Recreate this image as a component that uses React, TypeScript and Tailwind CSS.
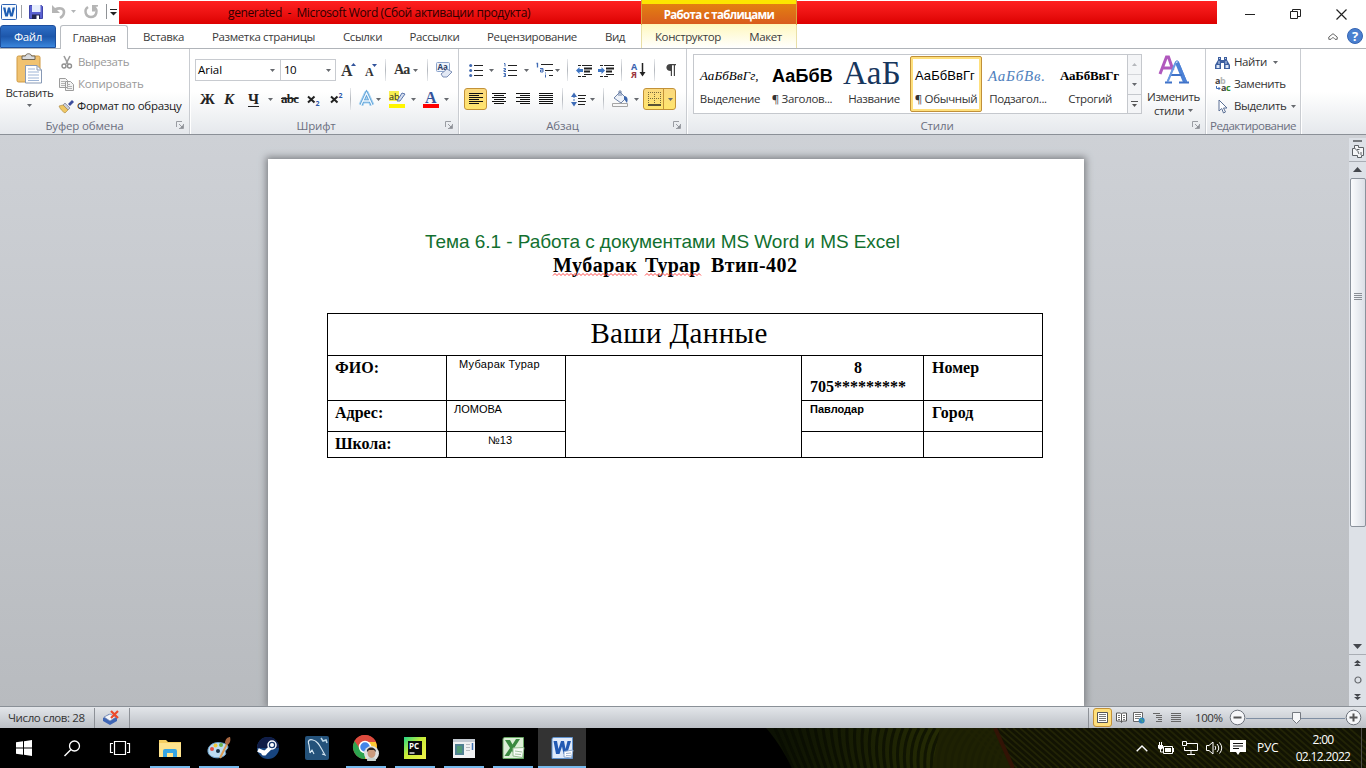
import React from "react";

type Kids = { className?: string; children?: React.ReactNode };

const Svg = ({ w, h, className = "", children }: Kids & { w: number; h: number }) => (
  <svg width={w} height={h} viewBox={`0 0 ${w} ${h}`} fill="none" className={"shrink-0 overflow-visible " + className}>
    {children}
  </svg>
);

const Arrow = ({ className = "" }: { className?: string }) => (
  <Svg w={5} h={3} className={className}>
    <path d="M0 0h5L2.500 3z" fill="#66696e" />
  </Svg>
);

const Sep = ({ className = "" }: { className?: string }) => (
  <span className={"h-[22px] w-px shrink-0 bg-gradient-to-b from-[#e8eaed] via-[#b4b8be] to-[#e8eaed] " + className} />
);

const Launcher = () => (
  <Svg w={8} h={8} className="absolute top-[3px] right-[5px]">
    <path d="M.5 6V.5H6M3 3l3 3M7.500 3v4.500H3" stroke="#9a9da3" />
    <path d="M7 4v3H4z" fill="#8d9096" />
  </Svg>
);

const Group = ({ label, className = "", labelClass = "tracking-[-0.15px]", launcher = true, children }: Kids & { label: string; labelClass?: string; launcher?: boolean }) => (
  <section className={"flex h-full shrink-0 flex-col border-r border-[#c9ccd1] shadow-[1px_0_0_#fff] " + className}>
    <div className="h-[69px] shrink-0">{children}</div>
    <div className={"relative flex h-[15px] items-center justify-center text-[11.5px] whitespace-nowrap text-[#6b6f80] " + labelClass}>
      {label}
      {launcher && <Launcher />}
    </div>
  </section>
);

const WordBadge = () => (
  <Svg w={16} h={16}>
    <rect x=".5" y=".5" width="15" height="15" rx="1" fill="#f6fafe" stroke="#2c62b4" />
    <path d="M2 3.500h2.500L5.500 9.500 7 3.500h2l1.500 6 1-6H14l-2.200 9H9.200L8 8l-1.200 4.500H4.200z" fill="#1f5fb4" />
  </Svg>
);

const Undo = () => (
  <Svg w={14} h={15}>
    <path d="M3 5.500c4-2 9-1.500 9 2.500 0 3-1.500 4.500-4 6" stroke="#b5b5b5" strokeWidth="2.600" />
    <path d="M0 1v8h8z" fill="#b5b5b5" />
  </Svg>
);

const Redo = () => (
  <Svg w={14} h={15}>
    <path d="M4 3C-.5 6 1.500 13 7 13s7.500-7 3-10" stroke="#b5b5b5" strokeWidth="2.500" />
    <path d="M8 1h6v1.500l-3 .5v4.500H8z" fill="#b5b5b5" />
  </Svg>
);

function TitleBar() {
  return (
    <header className="flex h-[25px] shrink-0 bg-white">
      <div className="flex h-[23px] w-[119px] items-center pl-px">
        <WordBadge />
        <span className="ml-[4px] h-[13px] w-px bg-[#9fa2a6]" />
        <Svg w={14} h={14} className="ml-[7px]">
          <path d="M.5.500h12l1 1v12H.5z" fill="#5a61d0" stroke="#3f44a8" />
          <path d="M3 0h8.500v7H3z" fill="#e6eefc" />
          <path d="M3 9.500h8V14H3z" fill="#22264f" />
          <path d="M7.500 10.500H10V14H7.500z" fill="#fff" />
        </Svg>
        <span className="ml-[9px] flex"><Undo /></span>
        <Arrow className="ml-[5px] opacity-50" />
        <span className="ml-[8px] flex"><Redo /></span>
        <span className="ml-[8px] h-[15px] w-px bg-[#8f9296]" />
        <Svg w={7} h={8} className="ml-[3px]">
          <path d="M0 1.500h7" stroke="#222" />
          <path d="M0 4h7L3.500 7.500z" fill="#222" />
        </Svg>
      </div>
      <div className="mt-px h-[23px] w-[522px] bg-gradient-to-b from-[#ff2020] to-[#dc0000] pl-[109px] text-[12px] leading-[24px] tracking-[-0.37px] whitespace-pre text-[#2d0000]">
        generated  -  Microsoft Word (Сбой активации продукта)
      </div>
      <div className="flex h-[25px] w-[156px] flex-col border-x border-[#d9a441]">
        <div className="h-[4px] bg-[#fde500]" />
        <div className="h-[20px] bg-gradient-to-b from-[#e38010] to-[#d95b1c] text-center text-[11.5px] leading-[22px] font-bold tracking-[-0.68px] whitespace-nowrap text-white">
          Работа с таблицами
        </div>
        <div className="flex-1 bg-[#fff7b8]" />
      </div>
      <div className="mt-px h-[23px] w-[420px] bg-gradient-to-b from-[#ff2020] to-[#dc0000]" />
      <div className="flex items-center pt-[3px]">
        <Svg w={11} h={11} className="ml-[28px]"><path d="M0 5.500h10" stroke="#222" /></Svg>
        <Svg w={11} h={11} className="ml-[34px]">
          <path d="M.5 2.500h7v7h-7zM2.500 2.500V.5h8v7H8" stroke="#222" />
        </Svg>
        <Svg w={11} h={11} className="ml-[35px]"><path d="M.5.5l10 10M10.500.5l-10 10" stroke="#222" strokeWidth="1.200" /></Svg>
      </div>
    </header>
  );
}

function Tabs() {
  const tab = "flex h-[24px] shrink-0 items-center justify-center whitespace-nowrap";
  return (
    <nav className="flex h-[24px] shrink-0 border-b border-[#b0b4b9] bg-white text-[11.5px] tracking-[-0.38px] text-[#3b3b3b]">
      <div className="mr-[4px] flex h-[23px] w-[56px] items-center justify-center rounded-t-[3px] border border-[#1d4f9d] bg-gradient-to-b from-[#2f6fc6] via-[#1d57ab] to-[#3a86dc] font-medium text-white">Файл</div>
      <div className="flex h-[24px] w-[68px] items-center justify-center rounded-t-[3px] border border-b-0 border-[#b8bcc1] bg-white">Главная</div>
      <div className={tab + " w-[71px]"}>Вставка</div>
      <div className={tab + " w-[129px]"}>Разметка страницы</div>
      <div className={tab + " w-[69px]"}>Ссылки</div>
      <div className={tab + " w-[75px]"}>Рассылки</div>
      <div className={tab + " w-[120px]"}>Рецензирование</div>
      <div className={tab + " mr-[3px] w-[46px]"}>Вид</div>
      <div className="flex h-[23px] w-[156px] border-x border-[#e9dfa6] bg-gradient-to-b from-[#fff8c0] to-white">
        <div className={tab + " w-[92px]"}>Конструктор</div>
        <div className={tab + " w-[63px]"}>Макет</div>
      </div>
      <Svg w={10} h={7} className="mt-[8px] ml-[531px]">
        <path d="M.8 4L5 .7 9.200 4v2.300H7L5 4.300l-2 2H.8z" stroke="#555" strokeWidth=".9" />
      </Svg>
      <Svg w={16} h={16} className="mt-[3px] ml-[9px]">
        <circle cx="8" cy="8" r="7.500" fill="#4a80d0" stroke="#3565b3" />
        <text x="8" y="12.500" textAnchor="middle" fontSize="13" fontWeight="700" fill="#fff">?</text>
      </Svg>
    </nav>
  );
}

function Clipboard() {
  return (
    <Group label="Буфер обмена" className="w-[190px] [&>div:last-child]:pr-[20px]">
      <div className="flex h-full">
        <div className="flex w-[59px] flex-col items-center pt-[4px]">
          <Svg w={27} h={31}>
            <rect x="1" y="3" width="23" height="26" rx="1.500" fill="#f0c270" stroke="#cf9a44" />
            <path d="M6 6.500V3h3.500c0-3 6-3 6 0H19v3.500z" fill="#d8dade" stroke="#6f6553" />
            <path d="M9.500 12.500H21l4.500 4.500v13h-16z" fill="#fff" stroke="#8799b5" />
            <path d="M12 16h7M12 19h11M12 22h11M12 25h11M12 27.500h11" stroke="#9db4d6" />
            <path d="M21 12.500V17h4.500" stroke="#8799b5" />
          </Svg>
          <div className="mt-px text-[11.500px] leading-[16px] tracking-[-0.35px] text-[#333]">Вставить</div>
          <Arrow className="mt-[3px]" />
        </div>
        <div className="flex flex-col text-[11.5px] tracking-[-0.35px] whitespace-nowrap">
          <div className="flex h-[25px] items-center pt-px text-[#9a9a9a]">
            <Svg w={12} h={14} className="ml-[2px]">
              <path d="M3 1l4 8M9 1L5 9" stroke="#9c9c9c" strokeWidth="1.600" />
              <circle cx="3" cy="11" r="2" stroke="#8f8f8f" strokeWidth="1.400" />
              <circle cx="8.500" cy="11" r="2" stroke="#8f8f8f" strokeWidth="1.400" />
            </Svg>
            <span className="ml-[5px]">Вырезать</span>
          </div>
          <div className="flex h-[20px] items-center text-[#9a9a9a]">
            <Svg w={15} h={13}>
              <path d="M.5.5h6l2 2v7h-8zM6.500 3.500h5l3 3v6h-8z" fill="#f4f4f4" stroke="#9c9c9c" />
              <path d="M2 3.500h4M2 5.500h4M2 7.500h4M8 6.500h3M8 8.500h5M8 10.500h5" stroke="#b3b3b3" />
            </Svg>
            <span className="ml-[4px] tracking-[-0.2px]">Копировать</span>
          </div>
          <div className="flex h-[24px] items-center text-[#222]">
            <Svg w={15} h={13}>
              <path d="M9 4l4-4 2 2-4 4z" fill="#3e4f9e" />
              <path d="M6 3l5 5-2 2-5-5z" fill="#c9ccd6" stroke="#6c6f7f" strokeWidth=".6" />
              <path d="M0 6l4-1 5 5-3 3C4 12 1 9 0 6z" fill="#efc765" stroke="#a8853b" strokeWidth=".6" />
            </Svg>
            <span className="ml-[3px] tracking-[-0.27px]">Формат по образцу</span>
          </div>
        </div>
      </div>
    </Group>
  );
}

const serif = "[font-family:'Liberation_Serif',serif]";

function FontGroup() {
  return (
    <Group label="Шрифт" className="w-[269px] [&>div:last-child]:pr-[16px]">
      <div className="flex h-[42px] items-center pl-[5px]">
        <div className="flex h-[22px] w-[86px] items-center border border-[#c8cbd0] bg-white pl-[2px] text-[11.5px] text-black">
          <span className="w-[72px]">Arial</span>
          <Arrow />
        </div>
        <div className="flex h-[22px] w-[55px] items-center border border-l-0 border-[#c8cbd0] bg-white pl-[3px] text-[11.5px] tracking-[-0.5px] text-black">
          <span className="w-[42px]">10</span>
          <Arrow />
        </div>
        <Svg w={15} h={16} className="ml-[5px]">
          <text x="0" y="14" fontSize="16" fontWeight="700" fontFamily="Liberation Serif" fill="#333">A</text>
          <path d="M10 4l2.500-3L15 4z" fill="#31539b" />
        </Svg>
        <Svg w={13} h={14} className="ml-[9px]">
          <text x="0" y="13" fontSize="12" fontWeight="700" fontFamily="Liberation Serif" fill="#333">A</text>
          <path d="M7 1h5L9.500 4z" fill="#31539b" />
        </Svg>
        <Sep className="ml-[7px]" />
        <span className={serif + " ml-[8px] w-[18px] text-[14px] leading-[16px] font-bold tracking-[-0.8px] text-[#333]"}>Aa</span>
        <Arrow className="ml-[1px]" />
        <Sep className="ml-[9px]" />
        <Svg w={17} h={16} className="ml-[8px]">
          <rect x=".5" y=".5" width="13" height="9" rx="1" fill="#eef3fb" stroke="#8aa3cc" />
          <text x="1.500" y="8" fontSize="8" fontWeight="700" fill="#2d3f68">Aa</text>
          <path d="M5 12l6-5 5 3-5 5H7z" fill="#e3e9f5" stroke="#7c8fb6" />
        </Svg>
      </div>
      <div className="flex h-[16px] items-center pl-[10px] text-[#222]">
        <span className={serif + " w-[24px] text-[15px] leading-[17px] font-bold"}>Ж</span>
        <span className={serif + " w-[24px] text-[15px] leading-[17px] font-bold italic"}>К</span>
        <span className={serif + " w-[11px] text-[15px] leading-[17px] font-bold underline underline-offset-2"}>Ч</span>
        <Arrow className="ml-[9px]" />
        <span className={serif + " ml-[8px] w-[17px] text-[13px] leading-[16px] font-bold tracking-[-0.7px] line-through"}>abc</span>
        <Svg w={13} h={14} className="ml-[9px]">
          <path d="M1 4.500l6.500 6M7.500 4.500l-6.500 6" stroke="#222" strokeWidth="2" />
          <text x="8.500" y="13.500" fontSize="7" fontWeight="700" fill="#2e57a8">2</text>
        </Svg>
        <Svg w={13} h={14} className="ml-[10px]">
          <path d="M1 4.500l6.500 6M7.500 4.500l-6.500 6" stroke="#222" strokeWidth="2" />
          <text x="8.500" y="6" fontSize="7" fontWeight="700" fill="#2e57a8">2</text>
        </Svg>
        <Sep className="ml-[7px]" />
        <Svg w={16} h={17} className="ml-[8px]">
          <path d="M2 14L7.500 2 13 14M4 10h7" stroke="#a8d3f2" strokeWidth="5" strokeLinejoin="round" />
          <path d="M2 14L7.500 2 13 14M4 10h7" stroke="#5b9fd6" strokeWidth="3" />
          <path d="M2 14L7.500 2 13 14M4 10h7" stroke="#f2f9fe" strokeWidth="1.300" />
        </Svg>
        <Arrow className="ml-[1px]" />
        <Svg w={18} h={17} className="ml-[8px]">
          <rect x="0" y="0" width="10" height="10" fill="#f8ef50" />
          <text x="0" y="8.500" fontSize="9" fill="#222">ab</text>
          <path d="M8 10l5-8 3 1-5 7z" fill="#d5dff0" stroke="#5974ab" />
          <path d="M0 13h16v4H0z" fill="#fff500" />
        </Svg>
        <Arrow className="ml-[4px]" />
        <Svg w={17} h={17} className="ml-[7px]">
          <text x="2" y="12" fontSize="16" fontWeight="700" fontFamily="Liberation Serif" fill="#35549b">A</text>
          <path d="M0 13h16v4H0z" fill="#f00" />
        </Svg>
        <Arrow className="ml-[4px]" />
      </div>
    </Group>
  );
}

const Lines = ({ kind }: { kind: "left" | "center" | "right" | "full" }) => (
  <Svg w={14} h={12}>
    {[0, 1, 2, 3, 4, 5].map((i) => {
      const len = i % 2 && kind !== "full" ? 10 : 14;
      const x = kind === "right" ? 14 - len : kind === "center" ? (14 - len) / 2 : 0;
      return <path key={i} d={`M${x} ${i * 2 + 0.5}h${len}`} stroke="#111" />;
    })}
  </Svg>
);

const Indent = ({ dir }: { dir: 1 | -1 }) => (
  <Svg w={16} h={13}>
    <path d="M6 1.500h10M6 12.500h4M8 10.500h8M2 1.500h3M2 12.500h3" stroke="#222" />
    <path d="M8 4.500h8M8 7.500h6" stroke="#222" strokeWidth="1.800" />
    <path d={dir === -1 ? "M0 6.500l3.500-3.500v2H7v3H3.500v2z" : "M7 6.500L3.500 3v2H0v3h3.500v2z"} fill="#3f76c4" />
  </Svg>
);

function Paragraph() {
  return (
    <Group label="Абзац" className="w-[228px] [&>div:last-child]:pr-[20px]">
      <div className="flex h-[42px] items-center pl-[10px]">
        <Svg w={14} h={13}>
          <path d="M5 1.500h9M5 6.500h9M5 11.500h9" stroke="#222" />
          <circle cx="1.700" cy="1.500" r="1.500" fill="#4069b0" /><circle cx="1.700" cy="6.500" r="1.500" fill="#4069b0" /><circle cx="1.700" cy="11.500" r="1.500" fill="#4069b0" />
        </Svg>
        <Arrow className="ml-[6px]" />
        <Svg w={15} h={14} className="ml-[9px]">
          <path d="M5 2.500h9M5 7.500h9M5 12.500h9" stroke="#222" />
          <path d="M1 .5h1v3M.5 5.500h2v1.500H1v1.500h2M.5 10.500h2v3H.5M1 12h1" stroke="#3f6ab4" />
        </Svg>
        <Arrow className="ml-[6px]" />
        <Svg w={17} h={14} className="ml-[7px]">
          <path d="M5 1.500h12M9 7.500h8M13 12.500h4" stroke="#222" />
          <path d="M.5.500h1v4" stroke="#3f6ab4" strokeWidth="1.300" /><path d="M4 5.500h3V9H4.500V7H7M9.500 9.500v1M9.500 11.500v3" stroke="#3f6ab4" />
        </Svg>
        <Arrow className="ml-[2px]" />
        <Sep className="ml-[7px]" />
        <span className="ml-[8px] flex"><Indent dir={-1} /></span>
        <span className="ml-[6px] flex"><Indent dir={1} /></span>
        <Sep className="ml-[7px]" />
        <Svg w={15} h={16} className="ml-[9px]">
          <text x="0" y="7.500" fontSize="9" fontWeight="700" fill="#3a63b0">A</text>
          <text x="0" y="15.500" fontSize="9" fontWeight="700" fill="#9b3440">Я</text>
          <path d="M11.500 1v11" stroke="#222" strokeWidth="1.500" /><path d="M8.500 10h6l-3 4.500z" fill="#222" />
        </Svg>
        <Sep className="ml-[8px]" />
        <Svg w={11} h={13} className="ml-[11px]">
          <path d="M4.500 0H10v1.200H9V12H7.800V1.200H6V12H4.800V7C-1 7-1 0 4.500 0z" fill="#444" />
        </Svg>
      </div>
      <div className="flex h-[16px] items-center pl-[5px]">
        <span className="flex h-[22px] w-[23px] items-center justify-center rounded-[3px] border border-[#c39238] bg-gradient-to-b from-[#fbd97f] to-[#ffe56d]"><Lines kind="left" /></span>
        <span className="ml-[5px] flex"><Lines kind="center" /></span>
        <span className="ml-[10px] flex"><Lines kind="right" /></span>
        <span className="ml-[9px] flex"><Lines kind="full" /></span>
        <Sep className="ml-[9px]" />
        <Svg w={16} h={15} className="ml-[8px]">
          <path d="M7 3.500h8M7 6.500h7M7 9.500h8M7 12.500h7" stroke="#222" />
          <path d="M0 5l3-4.500L6 5zM0 10l3 4.500L6 10z" fill="#3f6db8" /><path d="M3 4v7" stroke="#3f6db8" strokeDasharray="2 1" />
        </Svg>
        <Arrow className="ml-[3px]" />
        <Sep className="ml-[8px]" />
        <Svg w={17} h={16} className="ml-[8px]">
          <path d="M2 7l6-6 6 6-5 5z" fill="#eef2f8" stroke="#6f83a8" /><path d="M7 5V0h2v5" stroke="#6f83a8" />
          <path d="M12 5c4 0 4 4 3 7l-3-4z" fill="#3c66ad" />
          <path d="M.5 12.500h15v3H.5z" fill="#f7f7f7" stroke="#a5a5a5" />
        </Svg>
        <Arrow className="ml-[5px]" />
        <span className="ml-[4px] flex h-[22px] w-[33px] items-center rounded-[3px] border border-[#c39238] bg-gradient-to-b from-[#fbd97f] to-[#ffe56d] pl-[4px]">
          <Svg w={13} h={14}>
            <path d="M0 .5h13M0 6.500h13M.5 0v12M6.500 0v12M12.500 0v12" stroke="#7a6a3c" strokeDasharray="1 1" />
            <path d="M0 13h13" stroke="#222" strokeWidth="1.500" />
          </Svg>
          <span className="ml-[2px] h-full w-px bg-[#c39238]" />
          <Arrow className="ml-[4px]" />
        </span>
      </div>
    </Group>
  );
}

const Style = ({ name, on = false, children }: { name: string; on?: boolean; children: React.ReactNode }) => (
  <div className={"flex h-[56px] w-[72px] shrink-0 flex-col items-center overflow-hidden " + (on ? "rounded-[2px] border border-[#c0903a] bg-[#ffe07c] p-[2px]" : "px-[3px] pt-[3px]")}>
    <div className={"w-full flex-1 " + (on ? "bg-white" : "")}>
      <div className="flex h-[32px] w-full items-center pt-[2px] pl-[3px] whitespace-nowrap">{children}</div>
      <div className="text-center text-[11.5px] leading-[16px] tracking-[-0.35px] whitespace-nowrap text-[#333]">{name}</div>
    </div>
  </div>
);

function Styles() {
  return (
    <Group label="Стили" className="w-[519px] [&>div:last-child]:pr-[18px]">
      <div className="flex h-full">
        <div className="mt-[5px] ml-[6px] flex h-[60px] w-[449px] items-center border border-[#c5c8cd] bg-white">
          <Style name="Выделение"><span className={serif + " text-[13px] tracking-[0.1px] italic"}>АаБбВвГг,</span></Style>
          <Style name="¶ Заголов..."><span className="[font-family:'Liberation_Sans',sans-serif] text-[18px] font-bold tracking-[0.1px]">АаБбВ</span></Style>
          <Style name="Название"><span className={serif + " -mt-[7px] ml-[-1px] text-[33px] leading-[34px] tracking-[0.4px] text-[#17365d]"}>АаБ</span></Style>
          <Style name="¶ Обычный" on><span className="ml-[-1px] [font-family:'Liberation_Sans',sans-serif] text-[13px] tracking-[0.05px]">АаБбВвГг</span></Style>
          <Style name="Подзагол..."><span className={serif + " text-[15px] tracking-[0.8px] text-[#4f81bd] italic"}>АаБбВв.</span></Style>
          <Style name="Строгий"><span className={serif + " text-[13px] font-bold tracking-[-0.2px]"}>АаБбВвГг</span></Style>
          <div className="ml-auto flex h-full w-[14px] flex-col border-l border-[#c5c8cd] bg-[#f4f5f7]">
            <span className="flex h-[20px] items-center justify-center border-b border-[#d4d6da]"><Svg w={5} h={3}><path d="M0 3h5L2.500 0z" fill="#b5b8bc" /></Svg></span>
            <span className="flex h-[20px] items-center justify-center border-b border-[#c5c8cd]"><Arrow /></span>
            <span className="flex flex-1 items-center justify-center"><Svg w={7} h={7}><path d="M0 .5h7" stroke="#555" /><path d="M1 3h5L3.500 6z" fill="#555" /></Svg></span>
          </div>
        </div>
        <div className="flex w-[63px] flex-col items-center pt-[6px] text-[11.5px] leading-[13px] tracking-[-0.4px] text-[#333]">
          <Svg w={30} h={29}>
            <path d="M1 19L7.500 2h2L14 15M4 13h8" stroke="#b058bd" strokeWidth="3" />
            <path d="M8 27.500L17 6h2l9 21.500" stroke="#4c81d6" strokeWidth="1" />
            <path d="M18 7.500l8 19.500" stroke="#4c81d6" strokeWidth="4" />
            <path d="M11 20h12M6 27.500h7M20 27.500h10" stroke="#3f72c8" strokeWidth="1.800" />
            <path d="M16.500 8L8.500 27" stroke="#6a9ae2" strokeWidth="2" />
          </Svg>
          <div className="mt-[6px] leading-[14px]">Изменить</div>
          <div className="flex items-center">стили <Arrow className="ml-[4px]" /></div>
        </div>
      </div>
    </Group>
  );
}

function Editing() {
  return (
    <Group label="Редактирование" launcher={false} className="w-[95px]" labelClass="tracking-[-0.5px]">
      <div className="flex flex-col pl-[9px] text-[11.5px] tracking-[-0.38px] whitespace-nowrap text-[#333]">
        <div className="flex h-[25px] items-center pt-px">
          <Svg w={15} h={13}>
            <path d="M3 1h3v3h3V1h3v3l3 5v4H9V7H6v6H0V9l3-5z" fill="#3d5f9f" />
            <path d="M1.500 9h3v3h-3zM10.500 9h3v3h-3z" fill="#dbe6f6" /><path d="M4 2.500h1M10 2.500h1M4 5v3M11 5v3" stroke="#c4d4ee" />
          </Svg>
          <span className="ml-[4px]">Найти</span><Arrow className="ml-[6px]" />
        </div>
        <div className="flex h-[20px] items-center">
          <Svg w={16} h={15}>
            <text x="0" y="6.500" fontSize="9" fontWeight="700" fill="#444">a<tspan fill="#b4b4b4">b</tspan></text>
            <text x="6" y="14" fontSize="9" fontWeight="700" fill="#444">a<tspan fill="#2c8b2c">c</tspan></text>
            <path d="M1.500 9v2.500H5M3.500 10L5 11.500 3.500 13" stroke="#3f6db8" />
          </Svg>
          <span className="ml-[3px]">Заменить</span>
        </div>
        <div className="flex h-[24px] items-center">
          <Svg w={12} h={15} className="ml-[2px]"><path d="M2 1v11l2.700-2.500L6.500 14l2-1-2-4H10z" fill="#fff" stroke="#5a6f95" /></Svg>
          <span className="ml-[5px]">Выделить</span><Arrow className="ml-[5px]" />
        </div>
      </div>
    </Group>
  );
}

const Squiggle = ({ w }: { w: number }) => (
  <Svg w={w} h={3} className="absolute top-[20px] left-0">
    <path d={"M0 2.500" + "l2-2l2 2".repeat(Math.floor(w / 4))} stroke="#f33" strokeWidth=".9" />
  </Svg>
);

function Sheet() {
  const c = "border-t border-l border-black px-[7px] ";
  const b = "text-[16px] leading-[19px] font-bold ";
  const arial = "[font-family:'Liberation_Sans',sans-serif] text-[11px] leading-[13px] ";
  return (
    <main className="mt-[24px] ml-[268px] h-[547px] w-[816px] shrink-0 bg-white pl-[59px] text-black shadow-[0_0_7px_2px_#7f8286] [font-family:'Liberation_Serif',serif]">
      <h1 className="mt-[71px] ml-[98px] w-[500px] [font-family:'Liberation_Sans',sans-serif] text-[19px] leading-[24px] font-normal tracking-[-0.06px] whitespace-nowrap text-[#12702f]">
        Тема 6.1 - Работа с документами MS Word и MS Excel
      </h1>
      <h2 className="mt-[-1px] ml-[226px] flex text-[20px] leading-[24px] font-bold tracking-[0.45px] whitespace-nowrap">
        <span className="relative w-[92px]">Мубарак<Squiggle w={86} /></span>
        <span className="relative w-[66px] tracking-[0.2px]">Турар<Squiggle w={56} /></span>
        <span>Втип-402</span>
      </h2>
      <div className="mt-[36px] grid h-[145px] w-[716px] grid-cols-[119px_119px_236px_122px_119px] grid-rows-[42px_45px_31px_26px] border-r border-b border-black">
        <div className={c + "col-span-5 pt-[2px] pr-[19px] text-center text-[29px] leading-[34px] tracking-[0.35px]"}>Ваши Данные</div>
        <div className={c + b + "pt-[2px]"}>ФИО:</div>
        <div className={c + arial + "pt-[2px] pl-[12px] tracking-[0.3px]"}>Мубарак Турар</div>
        <div className={c + "row-span-3"} />
        <div className={c + b + "pt-[2px] pl-[8px]"}><div className="pl-[44px]">8</div>705*********</div>
        <div className={c + b + "pt-[2px] pl-[8px]"}>Номер</div>
        <div className={c + b + "pt-[2px]"}>Адрес:</div>
        <div className={c + arial + "pt-[2px]"}>ЛОМОВА</div>
        <div className={c + arial + "pt-[2px] pl-[8px] font-bold"}>Павлодар</div>
        <div className={c + b + "pt-[2px] pl-[8px]"}>Город</div>
        <div className={c + b + "pt-[2px]"}>Школа:</div>
        <div className={c + arial + "pt-[2px] pl-[41px]"}>№13</div>
        <div className={c} />
        <div className={c} />
      </div>
    </main>
  );
}

function ScrollBar() {
  return (
    <aside className="mt-[3px] ml-auto flex w-[17px] flex-col items-center bg-[#dde1e7]">
      <span className="mt-[2px] h-[2px] w-[9px] shrink-0 bg-[#75787c]" />
      <Svg w={12} h={13} className="mt-[3px]">
        <path d="M.5 3.500h2V.500h4v2h5v8h-2v2h-4v-2h-5z" stroke="#5c6065" fill="#f4f5f7" />
        <path d="M2.500 3l4 4M5 4.500h2.500M6 7l1 2M9 7v3" stroke="#5c6065" />
      </Svg>
      <span className="mt-[3px] h-px w-full shrink-0 bg-[#a9adb4]" />
      <Svg w={9} h={5} className="mt-[5px]"><path d="M0 5h9L4.500 0z" fill="#44474d" /></Svg>
      <div className="mt-[6px] flex h-[349px] w-[16px] shrink-0 flex-col items-center rounded-[2px] border border-[#8b929c] bg-gradient-to-r from-[#fafbfd] to-[#dbdfe6] pt-[114px]">
        <Svg w={8} h={8}><path d="M0 .5h8M0 2.500h8M0 4.500h8M0 6.500h8" stroke="#8a8e95" /></Svg>
      </div>
      <Svg w={9} h={5} className="mt-[117px]"><path d="M0 0h9L4.500 5z" fill="#44474d" /></Svg>
      <span className="mt-[5px] h-px w-full shrink-0 bg-[#a9adb4]" />
      <Svg w={7} h={7} className="mt-[5px]"><path d="M0 3h7L3.500 0zM0 6h7L3.500 3z" fill="#44474d" /></Svg>
      <Svg w={8} h={8} className="mt-[9px]"><circle cx="4" cy="4" r="3" stroke="#686b70" strokeWidth="1.200" /></Svg>
      <Svg w={7} h={7} className="mt-[9px]"><path d="M0 1h7L3.500 4zM0 4h7L3.500 7z" fill="#44474d" /></Svg>
    </aside>
  );
}

function StatusBar() {
  return (
    <footer className="flex h-[22px] shrink-0 items-center border-t border-[#8a9097] bg-gradient-to-b from-[#e3e6ea] to-[#bcc0c6] text-[11.5px] text-[#333]">
      <span className="w-[94px] pl-[8px] tracking-[-0.38px] whitespace-nowrap">Число слов: 28</span>
      <span className="h-[20px] w-px bg-[#8d9197]" />
      <Svg w={17} h={15} className="ml-[8px]">
        <path d="M0 8l6-4 8 4v3l-7 4-7-4z" fill="#3f66b5" /><path d="M1 7l6-3 6 3-6 4z" fill="#f4f6fa" stroke="#6e83ad" strokeWidth=".7" />
        <path d="M8 1l7 7M15 1L8 8" stroke="#ec4a2b" strokeWidth="2.200" />
      </Svg>
      <span className="ml-[9px] h-[20px] w-px bg-[#8d9197]" />
      <span className="ml-[958px] h-[20px] w-px bg-[#8d9197]" />
      <span className="ml-[4px] flex h-[19px] w-[19px] items-center justify-center rounded-[3px] border border-[#c39238] bg-[#ffe07c]">
        <Svg w={11} h={11}><path d="M.5.5h10v10H.5z" fill="#fff" stroke="#555" /><path d="M2 2.500h7M2 4.500h7M2 6.500h7M2 8.500h7" stroke="#777" /></Svg>
      </span>
      <Svg w={11} h={11} className="ml-[4px]"><path d="M.5 1h4l1 1 1-1h4v8h-4l-1 1.500-1-1.500h-4zM5.500 2v8" fill="#fff" stroke="#555" /><path d="M2 3.500h2M2 5.500h2M2 7.500h2M7 3.500h2M7 5.500h2M7 7.500h2" stroke="#777" /></Svg>
      <Svg w={12} h={12} className="ml-[6px]"><path d="M.5.5h9v9h-9z" fill="#fff" stroke="#666" /><path d="M2 2.500h6M2 4.500h6M2 6.500h4" stroke="#777" /><circle cx="8.700" cy="8.500" r="3" fill="#2e83b8" /><path d="M7 8c2-2 2 1 3 2" stroke="#58b46a" /></Svg>
      <Svg w={10} h={10} className="ml-[8px]"><path d="M0 .5h7M3 2.500h6M3 4.500h6M5 6.500h4M3 8.500h6" stroke="#666" /></Svg>
      <Svg w={10} h={10} className="ml-[8px]"><path d="M0 .5h10M0 2.500h10M0 4.500h10M0 6.500h10M0 8.500h10" stroke="#666" /></Svg>
      <span className="ml-[14px] w-[34px] tracking-[-0.4px]">100%</span>
      <Svg w={17} h={17}><circle cx="8.500" cy="8.500" r="7.300" fill="#f6f7f9" stroke="#6c717a" /><path d="M4.500 8.500h8" stroke="#555" strokeWidth="2" /></Svg>
      <Svg w={99} h={14}><path d="M0 7.500h99" stroke="#7f8ea2" /><path d="M46.500 1.500h8v7l-4 4-4-4z" fill="#f5f6f8" stroke="#747980" /></Svg>
      <Svg w={17} h={17}><circle cx="8.500" cy="8.500" r="7.300" fill="#f6f7f9" stroke="#6c717a" /><path d="M4.500 8.500h8M8.500 4.500v8" stroke="#555" strokeWidth="2" /></Svg>
    </footer>
  );
}

const Task = ({ on = false, open = true, className = "", children }: Kids & { on?: boolean; open?: boolean }) => (
  <div className={"relative flex h-[40px] w-[48px] shrink-0 items-center justify-center " + (on ? "bg-[#333] " : "") + className}>
    {children}
    {open && <span className={"absolute bottom-0 h-[2px] bg-[#76b9ed] " + (on ? "inset-x-0" : "inset-x-[4px]")} />}
  </div>
);

function TaskBar() {
  return (
    <div className="relative flex h-[40px] shrink-0 items-center bg-black text-white">
      <svg width="606" height="40" className="absolute top-0 left-[760px]">
        <defs>
          <linearGradient id="leaf"><stop offset="0" stopColor="#0b1003" /><stop offset=".3" stopColor="#262c04" /><stop offset=".65" stopColor="#1b1e04" /><stop offset="1" stopColor="#080803" /></linearGradient>
        </defs>
        <path d="M6 0h600v40H32C25 25 15 10 6 0z" fill="url(#leaf)" />
        {Array.from({ length: 32 }, (_, i) => (
          <path key={i} d={`M${15 + i * 8} 0q${8 - i} 18 ${18 - i * 1.4} 40`} stroke="#080b01" strokeWidth="3" fill="none" opacity=".65" />
        ))}
        <path d="M235 0h371v40H254z" fill="#121303" />
        {Array.from({ length: 56 }, (_, i) => (
          <path key={i} d={`M${204 + i * 7} 0l46 40`} stroke="#303208" strokeWidth="1.800" opacity=".55" />
        ))}
        <path d="M180 0h55l17 40h-80z" fill="#1d2004" opacity=".85" />
        <path d="M235 0l18 40" stroke="#321305" strokeWidth="4" />
      </svg>
      <div className="relative flex w-full items-center">
        <Task open={false}><Svg w={16} h={16}><path d="M0 2.300L7 1.300V7.500H0zM8 1.200L16 0v7.500H8zM0 8.500h7v6.200L0 13.700zM8 8.500h8V16L8 14.800z" fill="#fff" /></Svg></Task>
        <Task open={false}><Svg w={17} h={17}><circle cx="10.500" cy="6" r="5" stroke="#fff" strokeWidth="1.300" /><path d="M7 9.500L.5 16" stroke="#fff" strokeWidth="1.500" /></Svg></Task>
        <Task open={false}><Svg w={20} h={15}><path d="M4.500.5h11v13h-11zM3 2.500H.5v9H3M17 2.500h2.500v9H17" stroke="#fff" strokeWidth="1.200" /></Svg></Task>
        <Task className="ml-[2px]"><Svg w={22} h={19}><path d="M0 1h7l2 2h13v15H0z" fill="#f6cf62" /><path d="M0 4h22v14H0z" fill="#ffe48e" /><path d="M4 18v-6q0-2 2-2h10q2 0 2 2v6h-4v-4H8v4z" fill="#35a5e5" /></Svg></Task>
        <Task className="ml-px"><Svg w={24} h={24}><path d="M1 16C0 9 8 5 15 7c7 1 7 5 4 7-2 2 1 3-1 5C13 24 2 22 1 16z" fill="#bcdcf2" stroke="#6ba1ca" /><circle cx="5" cy="13" r="2" fill="#e54d42" /><circle cx="8.500" cy="9.500" r="2" fill="#f2c738" /><circle cx="14" cy="9" r="2" fill="#6ab14d" /><circle cx="11" cy="15" r="2" fill="#153046" /><path d="M13 22l7-14" stroke="#dc9d55" strokeWidth="2" /><path d="M18 7c0-4 3-6 5-6 1 3 0 7-3 8z" fill="#a86742" /></Svg></Task>
        <Task className="ml-px" open={false}><Svg w={22} h={22}><circle cx="11" cy="11" r="11" fill="#17447e" /><path d="M0 11a11 11 0 0 1 22 0z" fill="#101c46" /><path d="M1 13l7 3 7-7" stroke="#fff" strokeWidth="4" /><circle cx="15" cy="8" r="4" fill="#17376b" stroke="#fff" strokeWidth="1.500" /><circle cx="15" cy="8" r="2" fill="#fff" /><circle cx="7" cy="16" r="2.600" fill="#fff" /></Svg></Task>
        <Task className="ml-px" open={false}><Svg w={24} h={24}><rect width="24" height="24" rx="2" fill="#24527a" /><path d="M5 17L4 9C2 4 5 3 8 4c6 1 8 9 12 15l-3-1M5 17l2-3 2 4" stroke="#d7e8f3" strokeWidth="1.100" /><path d="M16 2l2 3 3-1 1 3" stroke="#c2dbe9" strokeWidth="1.500" /></Svg></Task>
        <Task className="ml-px"><Svg w={26} h={26}><circle cx="12" cy="12" r="12" fill="#dd4b3e" /><path d="M1.600 6A12 12 0 0 0 12 24l5-9z" fill="#2da44f" /><path d="M12 24A12 12 0 0 0 22.800 7H12z" fill="#fcc934" /><path d="M1.600 6A12 12 0 0 1 22.800 7H12l-5 7z" fill="#dd4b3e" /><circle cx="12" cy="12" r="5.500" fill="#4285e8" stroke="#fff" strokeWidth="1.500" /><circle cx="18.500" cy="18.500" r="7.500" fill="#dde1e2" /><path d="M14 26q0-4 4.500-4t4.500 4z" fill="#c4d0cd" /><ellipse cx="18.500" cy="18" rx="4" ry="5" fill="#c99a7d" /><path d="M14 17c-1-6 9-6 9 0l-2-2h-5z" fill="#292221" /></Svg></Task>
        <Task className="ml-px">
          <Svg w={22} h={22}><defs><linearGradient id="py" x1="0" y1="0" x2="1" y2="1"><stop stopColor="#22d788" /><stop offset=".45" stopColor="#c9ec38" /><stop offset="1" stopColor="#f2f24a" /></linearGradient></defs><path d="M0 0h22v22H0z" fill="url(#py)" /><path d="M4 4h14v14H4z" fill="#090909" /><text x="5" y="11.500" fontSize="8" fontWeight="700" fill="#fff">PC</text><path d="M5.500 16h5" stroke="#fff" strokeWidth="1.300" /></Svg>
        </Task>
        <Task className="ml-px"><Svg w={22} h={19}><path d="M0 0h22v19H0z" fill="#f0f1f2" /><path d="M0 0h22v3H0z" fill="#c2c9d1" /><path d="M2 5h9v11H2z" fill="#508092" /><path d="M4 7h5v7H4z" fill="#4f9872" /><path d="M13 5.500h4M13 8.500h4M13 11.500h4" stroke="#b9bcc0" /><path d="M19.500 4v7" stroke="#3f72b4" strokeWidth="1.500" /></Svg></Task>
        <Task className="ml-px"><Svg w={23} h={22}><path d="M1 2Q1 .500 3 .500h18.500v21H1z" fill="#dcefd7" stroke="#68a663" /><path d="M3 3h5l2.500 4.500L14 2h4l-5.500 8.500L18 19h-5l-3-5-3 5H2.500L8 11z" fill="#3a8a40" /><path d="M11 11l11-.5-1.500 10L11 19z" fill="#f7fbf6" stroke="#92bd8e" /><path d="M13 14l7 1M13 17l6 .5" stroke="#a0c19c" /></Svg></Task>
        <Task on className="ml-px"><Svg w={23} h={22}><path d="M1 2Q1 .500 3 .500h18.500v21H1z" fill="#dfeafa" stroke="#5f91cc" /><path d="M2.500 4H6l1.500 8L10 4h3l1.500 8L16.500 4H20l-4 13h-3.500L11 9.500 8.500 17H5z" fill="#2159b2" /><path d="M13 14.500l9-1.500-1.500 8-7.500-1z" fill="#fff" stroke="#8ba9d2" /><path d="M15 16.500l5-.5M15 18.500l5 .3" stroke="#9fb2ce" /></Svg></Task>
        <div className="ml-[550px] flex items-center">
          <Svg w={12} h={7}><path d="M.7 6.300L6 1l5.300 5.300" stroke="#fff" strokeWidth="1.400" /></Svg>
          <Svg w={16} h={13} className="ml-[10px]"><path d="M5.500 4.500h9v7h-9z" stroke="#fff" /><path d="M7 6h6v4H7zM15 6h1v4h-1zM0 3h5v3q-2.500 3-5 0zM1 0h1v3H1zM3 0h1v3H3z" fill="#fff" /><path d="M2.500 7v3H5" stroke="#fff" /></Svg>
          <Svg w={16} h={14} className="ml-[8px]"><path d="M5 2.500h10.500v7h-13V6M.5.5h4v4h-4zM9 10v3M5 13.500h8" stroke="#fff" /></Svg>
          <Svg w={17} h={14} className="ml-[8px]"><path d="M.5 4.500h2.500L7 1v12L3 9.500H.5zM9 5q1.500 2 0 4M11 3q3.500 4 0 8M13.500 1.500q4.500 5.500 0 11" stroke="#fff" /></Svg>
          <Svg w={16} h={16} className="ml-[7px]"><path d="M0 0h16v12h-6l-2 3-2-3H0z" fill="#fff" /><path d="M3 3.500h10M3 6h10M3 8.500h6" stroke="#111" /></Svg>
          <span className="ml-[11px] w-[23px] text-[12px] tracking-[-0.3px]">РУС</span>
          <div className="ml-[8px] flex w-[70px] flex-col items-center text-[12px] leading-[17px] tracking-[-0.65px] whitespace-nowrap"><span>2:00</span><span>02.12.2022</span></div>
          <span className="ml-[3px] h-[40px] w-px bg-[#4c4c47]" />
        </div>
      </div>
    </div>
  );
}

export default function App() {
  return (
    <div className="flex h-[768px] w-[1366px] flex-col overflow-hidden bg-white [font-family:'Open_Sans','Noto_Sans',sans-serif]">
      <TitleBar />
      <Tabs />
      <div className="flex h-[86px] shrink-0 border-b border-[#8b9097] bg-gradient-to-b from-white from-50% to-[#e5e8ec]">
        <Clipboard />
        <FontGroup />
        <Paragraph />
        <Styles />
        <Editing />
      </div>
      <div className="flex h-[571px] shrink-0 overflow-hidden bg-gradient-to-b from-[#ced1d6] to-[#b8bbbf]">
        <Sheet />
        <ScrollBar />
      </div>
      <StatusBar />
      <TaskBar />
    </div>
  );
}
